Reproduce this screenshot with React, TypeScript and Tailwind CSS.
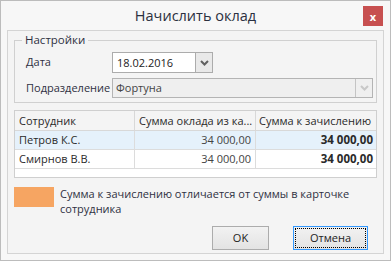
import React from "react";

const Chevron = ({ color }: { color: string }) => (
  <svg width="9" height="6" viewBox="0 0 9 6" fill="none">
    <path d="M1 1l3.5 3.5L8 1" stroke={color} strokeWidth={2} />
  </svg>
);

const rows = [
  { name: "Петров К.С.", salary: "34 000,00", total: "34 000,00", selected: true },
  { name: "Смирнов В.В.", salary: "34 000,00", total: "34 000,00", selected: false },
];

export default function App() {
  return (
    <div
      className="w-[391px] h-[261px] border border-[#bcbcbc] bg-[#f7f7f7] flex flex-col text-[11px] text-[#2f3142]"
      style={{ fontFamily: '"Open Sans", "Noto Sans", sans-serif' }}
    >
      {/* Title bar */}
      <div className="relative h-[29px] flex items-center justify-center">
        <span className="text-[14.5px] text-[#2b3040] leading-none mt-[1px]">Начислить оклад</span>
        <div className="absolute right-[7px] top-[5px] w-[20px] h-[20px] bg-[#c75050] flex items-center justify-center text-white font-bold text-[11px] leading-none">
          x
        </div>
      </div>

      {/* Panel */}
      <div className="mx-[6px] h-[224px] border border-[#d4d4d4] bg-[#f4f4f4] px-[6px] flex flex-col">
        <fieldset className="border border-[#d0d0d0] pl-[7px] pr-[3px] pb-[4px] mt-[1px]">
          <legend className="px-[3px] leading-[16px] text-[11.5px]">Настройки</legend>
          <div className="flex items-center mt-[4px] pl-[4px]">
            <span className="w-[86px] whitespace-nowrap">Дата</span>
            <div className="w-[101px] h-[21px] border border-[#acacac] bg-white flex">
              <span className="flex-1 pl-[4px] leading-[19px] text-[#222]">18.02.2016</span>
              <div className="w-[17px] border-l border-[#acacac] bg-[#e9e9e9] flex items-center justify-center">
                <Chevron color="#606060" />
              </div>
            </div>
          </div>
          <div className="flex items-center mt-[5px] pl-[4px]">
            <span className="w-[86px] whitespace-nowrap">Подразделение</span>
            <div className="w-[261px] h-[20px] border border-[#b4b4b4] bg-[#efefef] flex">
              <span className="flex-1 pl-[3px] leading-[18px] text-[#444]">Фортуна</span>
              <div className="w-[17px] border-l border-[#c4c4c4] flex items-center justify-center">
                <Chevron color="#c8c8c8" />
              </div>
            </div>
          </div>
        </fieldset>

        {/* Table */}
        <div className="mt-[7px] border border-[#cfcfcf] bg-white text-[#2a2a2a]">
          <div className="grid grid-cols-[120px_121px_1fr] h-[20px] border-b border-[#d8d8d8] bg-[#f4f4f4] leading-[19px] whitespace-nowrap">
            <div className="border-r border-[#d8d8d8] pl-[4px]">Сотрудник</div>
            <div className="border-r border-[#d8d8d8] pl-[4px] overflow-hidden">Сумма оклада из ка...</div>
            <div className="pl-[3px] overflow-hidden">Сумма к зачислению</div>
          </div>
          {rows.map((r, i) => (
            <div
              key={i}
              className={`grid grid-cols-[120px_121px_1fr] h-[19px] border-b border-[#dcdcdc] leading-[18px] ${
                r.selected ? "bg-[#e5f1fb]" : "bg-white"
              }`}
            >
              <div className="border-r border-[#dcdcdc] pl-[4px]">{r.name}</div>
              <div className="border-r border-[#dcdcdc] pr-[4px] text-right text-[#444]">{r.salary}</div>
              <div className="pr-[3px] text-right font-bold text-[11.5px]">{r.total}</div>
            </div>
          ))}
          <div className="h-[8px]" />
        </div>

        {/* Legend */}
        <div className="flex mt-[8px]">
          <div className="w-[40px] h-[20px] mt-[1px] bg-[#f6a562] shrink-0" />
          <p className="ml-[6px] leading-[15px] text-[#2f3142]">
            Сумма к зачислению отличается от суммы в карточке сотрудника
          </p>
        </div>

        {/* Buttons */}
        <div className="mt-auto mb-[3px] flex justify-end gap-[24px] pr-[9px]">
          <button className="w-[57px] h-[24px] border border-[#acacac] bg-gradient-to-b from-[#f2f2f2] to-[#e3e3e3] text-[#222]">
            OK
          </button>
          <button className="w-[75px] h-[24px] border border-[#3399ff] bg-gradient-to-b from-[#f2f2f2] to-[#e3e3e3] p-[1px]">
            <span className="block h-full border border-dotted border-black leading-[18px] text-[#222]">Отмена</span>
          </button>
        </div>
      </div>
    </div>
  );
}
